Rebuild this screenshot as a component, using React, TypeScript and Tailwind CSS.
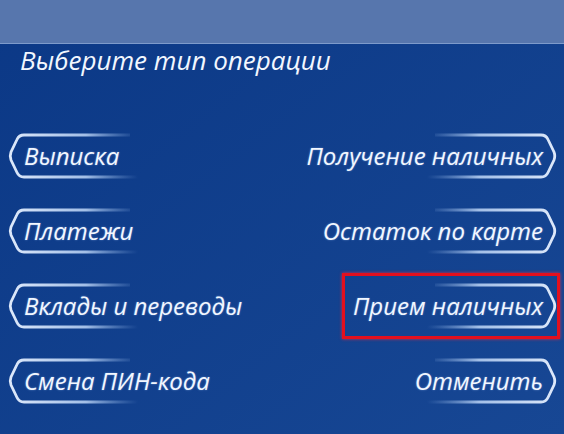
import React from 'react'

const left = ['Выписка', 'Платежи', 'Вклады и переводы', 'Смена ПИН-кода']
const right = ['Получение наличных', 'Остаток по карте', 'Прием наличных', 'Отменить']

function Bracket({ side }: { side: 'left' | 'right' }) {
  const id = `fade-${side}`
  return (
    <svg
      className={`absolute top-0 h-[46px] w-[130px] ${side === 'left' ? 'left-0' : 'right-0 -scale-x-100'}`}
      viewBox="0 0 130 46"
      fill="none"
    >
      <defs>
        <linearGradient id={id} x1="0" y1="0" x2="130" y2="0" gradientUnits="userSpaceOnUse">
          <stop offset="0" stopColor="#dfeafb" />
          <stop offset="0.6" stopColor="#b3cdf1" stopOpacity="0.9" />
          <stop offset="1" stopColor="#7fa5dc" stopOpacity="0" />
        </linearGradient>
      </defs>
      <path
        d="M122 2 L16 2 Q11 2 9 6.5 L3 19 Q1.5 23 3 27 L9 39.5 Q11 44 16 44 L130 44"
        stroke={`url(#${id})`}
        strokeWidth="2.8"
        strokeLinejoin="round"
      />
    </svg>
  )
}

function Option({ label, side, marked }: { label: string; side: 'left' | 'right'; marked?: boolean }) {
  return (
    <div className={`relative flex h-[46px] items-center ${side === 'left' ? 'justify-start pl-[16px]' : 'justify-end pr-[14px]'}`}>
      <Bracket side={side} />
      <span className="text-[24px] italic leading-none text-[#f2f7ff] [text-shadow:0_0_2px_rgba(180,210,255,0.5)]">
        {label}
      </span>
      {marked && (
        <div className="absolute -top-[10px] -bottom-[10px] -right-[3px] w-[218px] border-[3px] border-[#e3101e] shadow-[0_0_3px_rgba(255,40,60,0.8)]" />
      )}
    </div>
  )
}

export default function App() {
  return (
    <div className="h-[434px] w-[564px] overflow-hidden bg-gradient-to-br from-[#0b3886] to-[#174794] font-['Open_Sans',sans-serif]">
      <div className="h-[44px] border-b border-[#7e9bcb] bg-[#5776ad]" />
      <h1 className="pl-[20px] text-[26px] italic leading-[32px] text-[#f2f7ff]">Выберите тип операции</h1>
      <div className="mt-[57px] grid grid-cols-2 gap-y-[29px] pl-[8px] pr-[7px]">
        {left.map((l, i) => (
          <React.Fragment key={l}>
            <Option label={l} side="left" />
            <Option label={right[i]} side="right" marked={i === 2} />
          </React.Fragment>
        ))}
      </div>
    </div>
  )
}
